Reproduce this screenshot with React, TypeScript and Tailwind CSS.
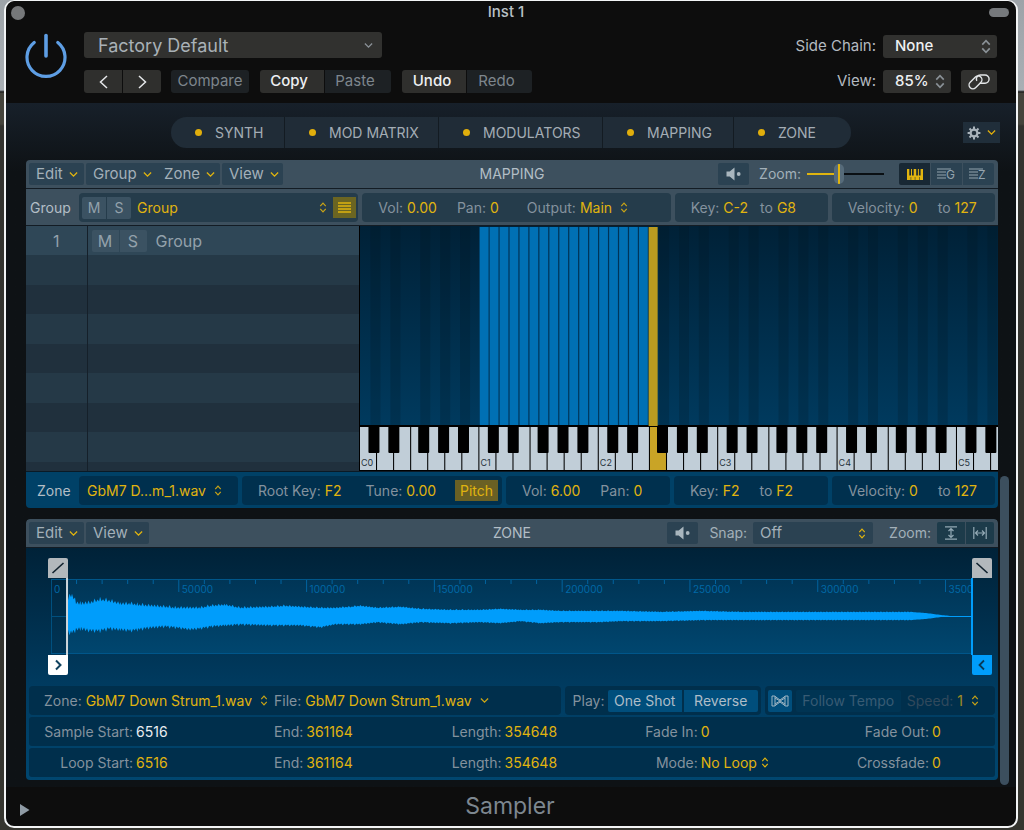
import { ReactNode } from "react";

const menuBtn =
  "flex h-[22px] items-center gap-[6px] px-[7px] text-[15px] text-[#a3b0b9] bg-[#2b4252]";
const fieldBox = "flex h-[29px] items-center rounded-[4px]";
const headBtn = "h-[23px] text-[15px]";

type IconProps = { className?: string };

function ChevronDown({ className = "" }: IconProps) {
  return (
    <svg viewBox="0 0 10 7" className={"h-[7px] w-[9px] shrink-0 " + className}>
      <path d="M1 1.3 5 5.3 9 1.3" fill="none" stroke="currentColor" strokeWidth="1.5" />
    </svg>
  );
}

function UpDown({ className = "h-[11px] w-[8px]" }: IconProps) {
  return (
    <svg viewBox="0 0 8 12" className={"shrink-0 " + className}>
      <path
        d="M1 4.5 4 1.3 7 4.5M1 7.5 4 10.7 7 7.5"
        fill="none"
        stroke="currentColor"
        strokeWidth="1.3"
      />
    </svg>
  );
}

function Power() {
  return (
    <svg viewBox="0 0 42 46" className="h-[46px] w-[42px]">
      <path
        d="M9.2 10.5A19 19 0 1 0 32.8 10.5"
        fill="none"
        stroke="#5e9ee4"
        strokeWidth="3.2"
        strokeLinecap="round"
      />
      <path d="M21 3.5V24" stroke="#5e9ee4" strokeWidth="3.6" strokeLinecap="round" />
    </svg>
  );
}

function Link() {
  return (
    <svg viewBox="0 0 22 17" className="h-[17px] w-[22px]">
      <g fill="none" stroke="#e3e6e8" strokeWidth="1.4">
        <rect x="0" y="5.6" width="15" height="7.6" rx="3.8" transform="rotate(-45 7.5 9.4)" />
        <path d="M11.8 10.2H17a4.1 4.1 0 0 0 0-8.2h-4.6a4.1 4.1 0 0 0-3.6 5.9" />
      </g>
    </svg>
  );
}

function Gear() {
  return (
    <svg viewBox="0 0 14 14" className="h-[14px] w-[14px]">
      <g stroke="#a9b3bb" fill="none">
        <circle cx="7" cy="7" r="3.4" strokeWidth="2.2" />
        <path
          d="M7 .6v2.4M7 11v2.4M.6 7H3M11 7h2.4M2.5 2.5l1.7 1.7M9.8 9.8l1.7 1.7M2.5 11.5l1.7-1.7M9.8 4.2l1.7-1.7"
          strokeWidth="2"
        />
      </g>
    </svg>
  );
}

function Speaker() {
  return (
    <svg viewBox="0 0 16 14" className="h-[14px] w-[16px]" fill="#a9b6be">
      <path d="M.5 4.5h3.2L8.5.5v13L3.7 9.5H.5z" />
      <circle cx="12.7" cy="7" r="1.9" />
    </svg>
  );
}

function PianoIcon() {
  return (
    <svg viewBox="0 0 16 11" className="h-[11px] w-[16px]">
      <path
        d="M0 0h2.3v6.5h1.7V0h1v6.5h1.7V0h2.5v6.5h1.7V0h1v6.5h1.7V0H16v11h-3.4V8h-.5v3H8.3V8h-.5v3H4.2V8h-.5v3H0z"
        fill="#e0b40f"
      />
    </svg>
  );
}

function LinesIcon({ letter }: { letter: string }) {
  return (
    <svg viewBox="0 0 22 18" className="h-[18px] w-[22px]">
      <path d="M1 4h14M1 7h9M1 10h9M1 13h9" stroke="#93a3ae" strokeWidth="1.2" />
      <text x="10" y="14" fontSize="12" fill="#93a3ae">
        {letter}
      </text>
    </svg>
  );
}

function ZoomV() {
  return (
    <svg viewBox="0 0 14 14" className="h-[14px] w-[14px]">
      <path
        d="M1 .8h12M1 13.2h12M7 2.5v9M4.5 5 7 2.5 9.5 5M4.5 9 7 11.5 9.5 9"
        fill="none"
        stroke="#93a9b4"
        strokeWidth="1.2"
      />
    </svg>
  );
}

function ZoomH() {
  return (
    <svg viewBox="0 0 14 14" className="h-[14px] w-[14px]">
      <path
        d="M.8 1v12M13.2 1v12M2.5 7h9M5 4.5 2.5 7 5 9.5M9 4.5 11.5 7 9 9.5"
        fill="none"
        stroke="#93a9b4"
        strokeWidth="1.2"
      />
    </svg>
  );
}

function FlexIcon() {
  return (
    <svg viewBox="0 0 18 12" className="h-[12px] w-[18px]">
      <path
        d="M1 1h2.5L9 5l5.5-4H17v10h-2.5L9 7l-5.5 4H1zM4 1v10M14 1v10M4 3l10 6M14 3 4 9"
        fill="none"
        stroke="#9fb6c4"
        strokeWidth="1"
      />
    </svg>
  );
}

function Param({
  label,
  value,
  className = "",
}: {
  label: string;
  value: string;
  className?: string;
}) {
  return (
    <label className={"flex items-center gap-1 whitespace-nowrap text-[#84929e] " + className}>
      {label}
      <input defaultValue={value} className="field-sizing-content min-w-0 text-[#e0b40f] outline-none" />
    </label>
  );
}

// drop-down with the label in front and the arrows behind
function Pick({
  label,
  hidden,
  value,
  icon,
  className = "",
}: {
  label: string;
  hidden?: boolean;
  value: string;
  icon?: ReactNode;
  className?: string;
}) {
  return (
    <label className={"flex items-center gap-1 whitespace-nowrap text-[#84929e] " + className}>
      {!hidden && label}
      <select
        aria-label={label}
        className="field-sizing-content appearance-none bg-transparent text-[#e0b40f] outline-none"
      >
        <option>{value}</option>
      </select>
      <span className="ml-1 text-[#c9a416]">{icon ?? <UpDown />}</span>
    </label>
  );
}

function HeadSelect({ id, value, className }: { id: string; value: string; className: string }) {
  return (
    <div className={"relative h-[23px] " + className}>
      <select
        id={id}
        className="h-full w-full appearance-none rounded-[3px] bg-[#31312f] pl-3 text-[15px] font-medium text-[#eef0f2] outline-none"
      >
        <option>{value}</option>
      </select>
      <UpDown className="pointer-events-none absolute right-[6px] top-[4px] h-[15px] w-[10px] text-[#8a9197]" />
    </div>
  );
}

function Header() {
  return (
    <header className="flex px-[19px] pb-[10px] pt-2">
      <button aria-label="Power" className="h-[46px] w-[42px]">
        <Power />
      </button>
      <div className="ml-[17px] flex flex-col gap-3">
        <div className="relative h-[26px] w-[298px]">
          <select
            aria-label="Preset"
            className="h-full w-full appearance-none rounded-[3px] bg-[#31312f] pl-[14px] text-lg text-[#a9b1b7] outline-none"
          >
            <option>Factory Default</option>
          </select>
          <ChevronDown className="pointer-events-none absolute right-[9px] top-[10px] text-[#8a9197]" />
        </div>
        <div className="flex">
          <div className="flex gap-px">
            {["Previous", "Next"].map((name, i) => (
              <button
                key={name}
                aria-label={name}
                className="flex h-[23px] w-[38px] items-center justify-center bg-[#2f2f2d] first:rounded-l-[3px] last:rounded-r-[3px]"
              >
                <svg viewBox="0 0 9 14" className="h-[14px] w-[9px]">
                  <path
                    d={i ? "M1 1 7.5 7 1 13" : "M8 1 1.5 7 8 13"}
                    fill="none"
                    stroke="#e6e8ea"
                    strokeWidth="1.5"
                  />
                </svg>
              </button>
            ))}
          </div>
          <button className={headBtn + " ml-[10px] w-[78px] rounded-[3px] bg-[#1d2124] text-[#7d868d]"}>
            Compare
          </button>
          <button className={headBtn + " ml-[11px] w-[64px] rounded-l-[3px] bg-[#2f2f2d] pr-[6px] font-medium text-[#eef0f2]"}>
            Copy
          </button>
          <button className={headBtn + " ml-px w-[66px] rounded-r-[3px] bg-[#1d2124] pr-[6px] text-[#7d868d]"}>
            Paste
          </button>
          <button className={headBtn + " ml-[11px] w-[64px] rounded-l-[3px] bg-[#2f2f2d] pr-1 font-medium text-[#eef0f2]"}>
            Undo
          </button>
          <button className={headBtn + " ml-px w-[65px] rounded-r-[3px] bg-[#1d2124] pr-[6px] text-[#7d868d]"}>
            Redo
          </button>
        </div>
      </div>
      <div className="ml-auto flex flex-col items-end gap-3 pt-[3px] text-[15px] text-[#b4bac0]">
        <div className="flex items-center gap-[7px]">
          <label htmlFor="side-chain">Side Chain:</label>
          <HeadSelect id="side-chain" value="None" className="w-[114px]" />
        </div>
        <div className="flex items-center gap-[7px]">
          <label htmlFor="view">View:</label>
          <HeadSelect id="view" value="85%" className="w-[68px]" />
          <button
            aria-label="Link"
            className="ml-[3px] flex h-[23px] w-[36px] items-center justify-center rounded-[3px] bg-[#31312f]"
          >
            <Link />
          </button>
        </div>
      </div>
    </header>
  );
}

function Tabs() {
  return (
    <div className="grid grid-cols-[1fr_680px_1fr] items-center px-4">
      <nav className="col-start-2 grid h-[31px] grid-cols-[113fr_154fr_164fr_131fr_118fr] overflow-hidden rounded-full bg-[#202c37]">
        {["SYNTH", "MOD MATRIX", "MODULATORS", "MAPPING", "ZONE"].map((t) => (
          <button
            key={t}
            className="flex items-center gap-[13px] whitespace-nowrap border-l border-[#131b22] pl-6 text-sm text-[#a4adb5] first:border-l-0"
          >
            <span className="h-[7px] w-[7px] rounded-full bg-[#e0ae0c]" />
            {t}
          </button>
        ))}
      </nav>
      <button
        aria-label="Settings"
        className="flex h-[21px] w-[37px] items-center justify-center gap-[6px] justify-self-end bg-[#202e3a]"
      >
        <Gear />
        <ChevronDown className="text-[#e0ae0c]" />
      </button>
    </div>
  );
}

const PITCH = 9.95;
const OCTAVE = PITCH * 12;
const blackNotes = [1, 3, 6, 8, 10];
const octaves = [0, 1, 2, 3, 4, 5];
const allNotes = Array.from({ length: 72 }, (_, i) => i);

function KeyMap() {
  return (
    <svg className="h-[245px] w-full bg-black" role="img" aria-label="Key map">
      <defs>
        <linearGradient id="field" x1="0" y1="0" x2="0" y2="1">
          <stop offset="0" stopColor="#002137" />
          <stop offset="1" stopColor="#003a5e" />
        </linearGradient>
      </defs>
      <rect x="1" width="100%" height="199" fill="url(#field)" />
      {allNotes.map((n) => {
        const x = 1.6 + n * PITCH;
        if (n >= 12 && n < 29)
          return (
            <g key={n}>
              <rect x={x - 1} y="1" width={PITCH} height="198" fill="#003a60" />
              <rect x={x - 0.2} y="1" width={PITCH - 1.2} height="198" fill="#0070b4" />
            </g>
          );
        if (n === 29) return <rect key={n} x={x - 0.5} y="1" width="9" height="199" fill="#b99b20" />;
        return blackNotes.includes(n % 12) ? (
          <rect key={n} x={x} width={PITCH} height="199" fill="#001220" opacity=".2" />
        ) : null;
      })}
      {octaves.map((o) => {
        const x = 1 + o * OCTAVE;
        return (
          <g key={o}>
            {[0, 1, 2, 3, 4, 5, 6].map((k) => (
              <rect
                key={k}
                x={x + (k * OCTAVE) / 7}
                y="201"
                width="16"
                height="43"
                fill={o === 2 && k === 3 ? "#c9a426" : "#c1ced8"}
              />
            ))}
            {blackNotes.map((b) => (
              <rect key={b} x={x + b * PITCH - 1.5} y="200" width="11" height="27" rx="1" fill="#000" />
            ))}
            <text x={x + 1} y="240" fontSize="9" fill="#26323b">
              C{o}
            </text>
          </g>
        );
      })}
    </svg>
  );
}

function MSButtons({ tone }: { tone: string }) {
  return (
    <div className={"flex gap-px text-[#93a1ab] " + tone}>
      <button className="h-[22px] w-[24px] rounded-l-[2px] bg-[#3b5262]">M</button>
      <button className="h-[22px] w-[24px] rounded-r-[2px] bg-[#3b5262]">S</button>
    </div>
  );
}

function GroupList() {
  return (
    <div className="h-[245px] overflow-hidden">
      <table className="w-full border-collapse">
        <tbody>
          {[0, 1, 2, 3, 4, 5, 6, 7, 8].map((r) => (
            <tr
              key={r}
              className="h-[30px] bg-[#20303d] odd:h-[29px] even:bg-[#253947] first:bg-[#2f4757]"
            >
              <td className="w-[61px] border-r border-[#15202a] p-0 pt-px text-center text-base leading-5 text-[#93a1ab]">
                {r === 0 && 1}
              </td>
              <td className="p-0 pt-px">
                {r === 0 && (
                  <div className="flex items-center gap-[9px] pl-1 text-base leading-5 text-[#93a1ab]">
                    <MSButtons tone="[&>button]:w-[27px]" />
                    <span>Group</span>
                  </div>
                )}
              </td>
            </tr>
          ))}
        </tbody>
      </table>
    </div>
  );
}

function PanelBar({ title, left, right }: { title: string; left: ReactNode; right: ReactNode }) {
  return (
    <div className="grid h-[29px] grid-cols-[1fr_auto_1fr] items-center rounded-t-[4px] border-b border-[#131c24] bg-[#3d505e] px-[3px]">
      <div className="flex">{left}</div>
      <h2 className="text-sm text-[#b3bec6]">{title}</h2>
      <div className="flex items-center justify-end">{right}</div>
    </div>
  );
}

function MenuButton({ children, className = "" }: { children: string; className?: string }) {
  return (
    <button className={menuBtn + " " + className}>
      {children}
      <ChevronDown className="ml-auto text-[#e0b40f]" />
    </button>
  );
}

function MuteButton() {
  return (
    <button
      aria-label="Preview"
      className="flex h-[22px] w-[31px] items-center justify-center rounded-[2px] bg-[#2b4252]"
    >
      <Speaker />
    </button>
  );
}

function Mapping() {
  const iconBtn = "flex h-[22px] w-[31px] items-center justify-center";
  return (
    <section>
      <PanelBar
        title="MAPPING"
        left={
          <>
            <MenuButton className="w-[55px] rounded-[2px]">Edit</MenuButton>
            <MenuButton className="ml-[2px] w-[72px] rounded-l-[2px]">Group</MenuButton>
            <MenuButton className="w-[62px] rounded-r-[2px] pl-[6px]! pr-[5px]!">Zone</MenuButton>
            <MenuButton className="ml-[2px] w-[61px] rounded-[2px]">View</MenuButton>
          </>
        }
        right={
          <>
            <MuteButton />
            <label htmlFor="map-zoom" className="ml-[10px] text-sm text-[#a3b0b9]">
              Zoom:
            </label>
            <input
              id="map-zoom"
              type="range"
              defaultValue={40}
              className="ml-[6px] mr-[15px] h-5 w-[77px] appearance-none bg-[linear-gradient(90deg,#e0b40f_40%,#0a0f13_40%)] bg-[length:100%_2px] bg-center bg-no-repeat [&::-webkit-slider-thumb]:h-5 [&::-webkit-slider-thumb]:w-[10px] [&::-webkit-slider-thumb]:appearance-none [&::-webkit-slider-thumb]:rounded-full [&::-webkit-slider-thumb]:bg-[linear-gradient(90deg,#566b7a_4px,#e0b40f_4px,#e0b40f_6px,#566b7a_6px)]"
            />
            <button aria-label="Key mapping" className={iconBtn + " rounded-l-[2px] bg-[#182834]"}>
              <PianoIcon />
            </button>
            <button aria-label="Group list" className={iconBtn + " ml-px bg-[#2b4252]"}>
              <LinesIcon letter="G" />
            </button>
            <button aria-label="Zone list" className={iconBtn + " ml-px mr-px rounded-r-[2px] bg-[#2b4252]"}>
              <LinesIcon letter="Z" />
            </button>
          </>
        }
      />
      <div className="flex border-b border-[#131c24] bg-[#3d505e] pb-[3px] pr-[3px] pt-1 text-sm">
        <span className="flex w-[53px] items-center pl-1 text-[#b3bec6]">Group</span>
        <div className="grid flex-1 grid-cols-[279fr_308fr_153fr_163fr] gap-1">
          <div className={fieldBox + " bg-[#253c4b] pl-[3px] pr-[2px]"}>
            <MSButtons tone="" />
            <Pick label="Group" hidden value="Group" className="ml-[6px] flex-1 [&>select]:flex-1" />
            <button
              aria-label="Show group list"
              className="ml-[6px] flex h-[21px] w-[23px] items-center justify-center bg-[#6b6522]"
            >
              <svg viewBox="0 0 13 11" className="h-[11px] w-[13px]">
                <path d="M0 1h13M0 4h13M0 7h13M0 10h13" stroke="#e0b40f" strokeWidth="1.4" />
              </svg>
            </button>
          </div>
          <div className={fieldBox + " bg-[#253c4b] pl-4"}>
            <Param label="Vol:" value="0.00" />
            <Param label="Pan:" value="0" className="ml-5" />
            <Pick label="Output:" value="Main" className="ml-7" />
          </div>
          <div className={fieldBox + " bg-[#253c4b] pl-4"}>
            <Param label="Key:" value="C-2" />
            <Param label="to" value="G8" className="ml-3" />
          </div>
          <div className={fieldBox + " bg-[#253c4b] pl-4"}>
            <Param label="Velocity:" value="0" />
            <Param label="to" value="127" className="ml-5" />
          </div>
        </div>
      </div>
      <div className="grid grid-cols-[333fr_639fr]">
        <GroupList />
        <KeyMap />
      </div>
      <div className="flex rounded-b-[4px] border-t border-[#0a1a26] bg-[#004167] pb-[3px] pr-[3px] pt-1 text-sm">
        <span className="flex w-[53px] items-center pl-[11px] text-[#b3bec6]">Zone</span>
        <div className="grid flex-1 grid-cols-[159fr_260fr_164fr_154fr_163fr] gap-1">
          <div className={fieldBox + " bg-[#00304e] pl-2"}>
            <Pick label="Zone" hidden value="GbM7 D...m_1.wav" />
          </div>
          <div className={fieldBox + " bg-[#00304e] pl-4"}>
            <Param label="Root Key:" value="F2" />
            <Param label="Tune:" value="0.00" className="ml-6" />
            <button className="ml-auto mr-1 h-[21px] w-[43px] bg-[#6a6024] text-[#e0b40f]">Pitch</button>
          </div>
          <div className={fieldBox + " bg-[#00304e] pl-4"}>
            <Param label="Vol:" value="6.00" />
            <Param label="Pan:" value="0" className="ml-5" />
          </div>
          <div className={fieldBox + " bg-[#00304e] pl-4"}>
            <Param label="Key:" value="F2" />
            <Param label="to" value="F2" className="ml-5" />
          </div>
          <div className={fieldBox + " bg-[#00304e] pl-4"}>
            <Param label="Velocity:" value="0" />
            <Param label="to" value="127" className="ml-5" />
          </div>
        </div>
      </div>
    </section>
  );
}

// x, top, bottom of the sample's envelope
const envelope = [
  [17, 21, 53], [21, 17, 54], [25, 25, 51], [30, 26, 50], [39, 25, 52], [49, 22, 52], [58, 23, 50],
  [69, 26, 51], [79, 26, 52], [87, 27, 51], [99, 28, 49], [114, 29, 48], [124, 30, 49], [139, 30, 51],
  [149, 30, 50], [160, 28, 48], [174, 27, 47], [189, 30, 46], [219, 29, 47], [234, 28, 47],
  [249, 29, 47], [269, 30, 49], [284, 30, 46], [299, 29, 46], [309, 28, 46], [326, 30, 44],
  [349, 29, 46], [369, 31, 44], [399, 32, 45], [429, 32, 44], [449, 31, 45], [469, 32, 43],
  [489, 32, 45], [509, 33, 44], [549, 33, 44], [569, 33, 43], [609, 34, 43], [649, 33, 42],
  [689, 34, 42], [729, 34, 42], [769, 34, 42], [829, 34, 42], [859, 34, 42], [874, 35, 41],
  [889, 37, 39], [899, 38, 39], [921, 38, 39],
];

function wavePath() {
  const top: string[] = [];
  const bottom: string[] = [];
  let n = 0;
  for (let i = 0; i < envelope.length - 1; i++) {
    const [x0, a0, b0] = envelope[i];
    const [x1, a1, b1] = envelope[i + 1];
    for (let x = x0; x < x1; x += 1.5) {
      const t = (x - x0) / (x1 - x0);
      const size = x > 860 ? 0 : 0.3 + 2 * Math.exp(-x / 180);
      const spike = size * (n % 2 ? 1.2 + Math.sin(n * 1.7) * 0.6 : -0.6);
      top.push(`${x} ${(a0 + (a1 - a0) * t - spike).toFixed(2)}`);
      bottom.unshift(`${x} ${(b0 + (b1 - b0) * t + spike).toFixed(2)}`);
      n++;
    }
  }
  return "M" + top.join("L") + "L921 38.2L921 39.2L" + bottom.join("L") + "Z";
}

function Waveform() {
  const ticks = Array.from({ length: 36 }, (_, i) => i + 1);
  return (
    <div className="bg-linear-to-b from-[#002238] to-[#003b60] pb-[11px] pl-[22px] pr-[6px] pt-[10px]">
      <div className="flex justify-between">
        <button aria-label="Fade in" className="h-5 w-5 rounded-t-[2px] bg-[#b3b8bc]">
          <svg viewBox="0 0 20 20">
            <path d="M4.5 15 15.5 5" stroke="#10202c" strokeWidth="1.6" />
          </svg>
        </button>
        <button aria-label="Fade out" className="h-5 w-5 rounded-t-[2px] bg-[#b3b8bc]">
          <svg viewBox="0 0 20 20">
            <path d="M4.5 5 15.5 15" stroke="#10202c" strokeWidth="1.6" />
          </svg>
        </button>
      </div>
      <div className="ml-[3px] mr-[19px]">
        <svg className="block h-[77px] w-full" role="img" aria-label="Sample waveform">
          <defs>
            <linearGradient id="region" x1="0" y1="0" x2="0" y2="1">
              <stop offset="0" stopColor="#003556" />
              <stop offset="1" stopColor="#00466f" />
            </linearGradient>
          </defs>
          <rect x="16" y="1" width="100%" height="75" fill="url(#region)" />
          <path d="M.5 1V76M0 38.5H16" stroke="#00507f" />
          <rect y="1" width="100%" height="1" fill="#00568a" />
          <rect y="75" width="100%" height="1" fill="#00568a" />
          {ticks.map((i) => {
            const x = `${(i * 13.86) / 5}%`;
            return (
              <line key={i} x1={x} x2={x} y1="2" y2={i % 5 ? 6 : 14} stroke="#00639f" />
            );
          })}
          {[0, 1, 2, 3, 4, 5, 6, 7].map((i) => (
            <text key={i} x={`${i * 13.86}%`} dx="3" y="15" fontSize="10" fill="#0068a6">
              {i * 50000}
            </text>
          ))}
          <svg viewBox="0 0 921 77" preserveAspectRatio="none" width="100%" height="77">
            <path d={wavePath()} fill="#009dfb" />
            <rect x="15" width="2" height="77" fill="#cdd5da" />
            <rect x="919" width="2" height="77" fill="#009dfb" />
          </svg>
        </svg>
      </div>
      <div className="flex justify-between">
        <button aria-label="Sample start" className="h-5 w-5 rounded-b-[2px] bg-white">
          <svg viewBox="0 0 20 20">
            <path d="M8 5.5 12.5 10 8 14.5" fill="none" stroke="#10425f" strokeWidth="2" />
          </svg>
        </button>
        <button aria-label="Sample end" className="h-5 w-5 rounded-b-[2px] bg-[#009dfb]">
          <svg viewBox="0 0 20 20">
            <path d="M12 5.5 7.5 10 12 14.5" fill="none" stroke="#07395a" strokeWidth="1.8" />
          </svg>
        </button>
      </div>
    </div>
  );
}

const rows = [
  [
    ["Sample Start:", "6516"],
    ["End:", "361164"],
    ["Length:", "354648"],
    ["Fade In:", "0"],
    ["Fade Out:", "0"],
  ],
  [
    ["Loop Start:", "6516"],
    ["End:", "361164"],
    ["Length:", "354648"],
    ["Mode:", "No Loop"],
    ["Crossfade:", "0"],
  ],
];

function Zone() {
  const playBtn = "h-[22px] w-[74px] bg-[#004e7c] text-sm text-[#aebdc8]";
  return (
    <section className="overflow-hidden rounded-[4px]">
      <PanelBar
        title="ZONE"
        left={
          <>
            <MenuButton className="w-[55px] rounded-[2px]">Edit</MenuButton>
            <MenuButton className="ml-[2px] w-[63px] rounded-[2px]">View</MenuButton>
          </>
        }
        right={
          <>
            <MuteButton />
            <label htmlFor="snap" className="ml-[11px] text-sm text-[#a3b0b9]">
              Snap:
            </label>
            <div className="relative ml-[6px] mr-4 h-[22px] w-[120px]">
              <select
                id="snap"
                className="block h-full w-full appearance-none rounded-[2px] bg-[#2b4252] pl-[7px] text-[15px] leading-5 text-[#a3b0b9] outline-none"
              >
                <option>Off</option>
              </select>
              <UpDown className="pointer-events-none absolute right-[7px] top-[6px] h-[11px] w-[8px] text-[#e0b40f]" />
            </div>
            <span className="text-sm text-[#a3b0b9]">Zoom:</span>
            <button
              aria-label="Zoom vertical"
              className="ml-[6px] flex h-[22px] w-[28px] items-center justify-center rounded-l-[2px] bg-[#1d3b4a]"
            >
              <ZoomV />
            </button>
            <button
              aria-label="Zoom horizontal"
              className="ml-px mr-px flex h-[22px] w-[28px] items-center justify-center rounded-r-[2px] bg-[#1d3b4a]"
            >
              <ZoomH />
            </button>
          </>
        }
      />
      <Waveform />
      <div className="flex flex-col gap-[2px] bg-linear-to-b from-[#003b60] to-[#00466f] px-[3px] pb-[3px] text-sm">
        <div className="grid grid-cols-[531fr_196fr_230fr] gap-1">
          <div className={fieldBox + " bg-[#002f4c] pl-[15px]"}>
            <Pick label="Zone:" value="GbM7 Down Strum_1.wav" />
            <Pick
              label="File:"
              value="GbM7 Down Strum_1.wav"
              icon={<ChevronDown />}
              className="ml-[6px]"
            />
          </div>
          <div className={fieldBox + " bg-[#002f4c] pl-2 text-[#84929e]"}>
            Play:
            <button className={playBtn + " ml-auto rounded-l-[2px]"}>One Shot</button>
            <button className={playBtn + " ml-[2px] mr-[3px] rounded-r-[2px]"}>Reverse</button>
          </div>
          <div className={fieldBox + " bg-[#002f4c] pl-[3px]"}>
            <button
              aria-label="Flex"
              className="flex h-[22px] w-[24px] items-center justify-center rounded-[2px] bg-[#004e7c]"
            >
              <FlexIcon />
            </button>
            <button
              disabled
              className="ml-1 h-[22px] w-[105px] whitespace-nowrap rounded-[2px] bg-[#003453] text-[#385b73]"
            >
              Follow Tempo
            </button>
            <Pick label="Speed:" value="1" className="ml-[6px] text-[#30495c]! [&>select]:opacity-70" />
          </div>
        </div>
        {rows.map((row, r) => (
          <div
            key={r}
            className="grid h-[29px] grid-cols-[104fr_100fr_70fr_101fr_97fr_100fr_96fr_100fr_131fr_66fr] items-center whitespace-nowrap rounded-[3px] bg-[#002f4c] text-[#84929e]"
          >
            {row.map(([label, value], c) => {
              const id = `range-${r}-${c}`;
              return [
                <label key={id + "l"} htmlFor={id} className="text-right">
                  {label}
                </label>,
                value === "No Loop" ? (
                  <div key={id} className="flex items-center gap-1 pl-[3px] text-[#e0b40f]">
                    <select id={id} className="field-sizing-content appearance-none outline-none">
                      <option>{value}</option>
                    </select>
                    <UpDown />
                  </div>
                ) : (
                  <input
                    key={id}
                    id={id}
                    defaultValue={value}
                    className={
                      "w-full pl-[3px] outline-none " +
                      (r + c === 0 ? "text-[#e9edf0]" : "text-[#e0b40f]")
                    }
                  />
                ),
              ];
            })}
          </div>
        ))}
      </div>
    </section>
  );
}

export default function App() {
  return (
    <div className="min-h-screen bg-[linear-gradient(#9da3a8_0,#a9afb4_90px,#111_92px,#45443c_93px,#45443c_124px,#33332f_126px,#35352f_100%)] pl-1 pr-[6px] font-[Inter,'Liberation_Sans',sans-serif]">
      <div className="rounded-[10px] border-2 border-t border-[#f2f4f5] bg-[#0d0d0d]">
        <div className="grid h-[23px] grid-cols-[1fr_auto_1fr] items-center pl-[5px] pr-[7px]">
          <button aria-label="Close" className="h-[14px] w-[14px] rounded-full bg-[#76787a]" />
          <h1 className="pr-2 text-[15px] font-medium text-[#b9c0c6]">Inst 1</h1>
          <button
            aria-label="Collapse"
            className="h-[9px] w-5 justify-self-end rounded-full bg-[#76797c]"
          />
        </div>
        <Header />
        <main className="bg-linear-to-b from-[#17202a] to-[#0e1215] to-10% pt-[14px]">
          <Tabs />
          <div className="mt-3 flex gap-[2px] pl-5 pr-[7px]">
            <div className="flex min-w-0 flex-1 flex-col gap-[11px] pb-[7px]">
              <Mapping />
              <Zone />
            </div>
            <div className="flex w-[9px] flex-col justify-end pb-[2px]">
              <div className="h-[309px] rounded-full bg-[#3c4f5e]" />
            </div>
          </div>
        </main>
        <footer className="grid h-[39px] grid-cols-[1fr_auto_1fr] items-center pl-[14px] pr-4">
          <button aria-label="Show details" className="w-[10px] pt-[6px]">
            <svg viewBox="0 0 10 12" className="h-[12px] w-[10px]">
              <path d="M0 0 9.5 6 0 12z" fill="#8f9ba5" />
            </svg>
          </button>
          <span className="pb-[2px] text-[23px] leading-8 text-[#7d8790]">Sampler</span>
        </footer>
      </div>
    </div>
  );
}
